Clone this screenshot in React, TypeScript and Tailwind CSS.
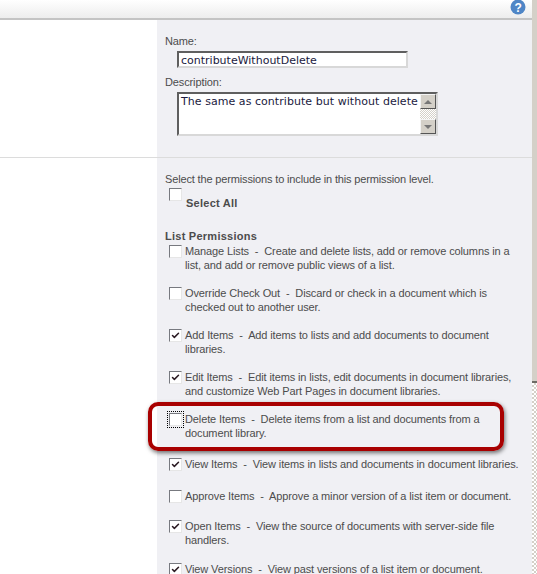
import { Check } from "lucide-react";

const font = "font-['Liberation_Sans',Arial,sans-serif]";

const permissions = [
  { title: "Manage Lists", text: "Create and delete lists, add or remove columns in a list, and add or remove public views of a list.", checked: false, mb: "mb-3.5" },
  { title: "Override Check Out", text: "Discard or check in a document which is checked out to another user.", checked: false, mb: "mb-3.5" },
  { title: "Add Items", text: "Add items to lists and add documents to document libraries.", checked: true, mb: "mb-3.5" },
  { title: "Edit Items", text: "Edit items in lists, edit documents in document libraries, and customize Web Part Pages in document libraries.", checked: true, mb: "mb-3.5" },
  { title: "Delete Items", text: "Delete items from a list and documents from a document library.", checked: false, mb: "mb-[17px]", focus: true },
  { title: "View Items", text: "View items in lists and documents in document libraries.", checked: true, mb: "mb-[18px]" },
  { title: "Approve Items", text: "Approve a minor version of a list item or document.", checked: false, mb: "mb-4" },
  { title: "Open Items", text: "View the source of documents with server-side file handlers.", checked: true, mb: "mb-[15px]" },
  { title: "View Versions", text: "View past versions of a list item or document.", checked: true, mb: "mb-0" },
];

function Box({ checked, focus }: { checked?: boolean; focus?: boolean }) {
  return (
    <span className={`flex h-[13px] w-[13px] shrink-0 items-center justify-center border border-[#77797f] border-r-[#e6e6e6] border-b-[#e6e6e6] bg-white ${focus ? "outline-1 outline-offset-1 outline-dotted outline-black" : ""}`}>
      {checked && <Check size={9} strokeWidth={4} className="text-[#2a1a22]" />}
    </span>
  );
}

function ScrollButton({ up }: { up?: boolean }) {
  return (
    <span className="flex h-[15px] w-4 items-center justify-center border border-[#f4f4f4] border-r-[#555] border-b-[#555] bg-[#d4d0c8]">
      <span className={`h-0 w-0 border-x-[4px] border-x-transparent ${up ? "border-b-[4px] border-b-[#777]" : "border-t-[4px] border-t-[#777]"}`} />
    </span>
  );
}

export default function App() {
  return (
    <div className={`relative flex h-[574px] w-[537px] overflow-hidden bg-white text-[11px] leading-[14px] tracking-[-0.12px] text-[#4c4c4c] ${font}`}>
      <div className="flex min-w-0 flex-1 flex-col">
        {/* Top bar */}
        <header className="flex h-[20px] shrink-0 justify-end border-b-2 border-[#c4c4c4] bg-gradient-to-b from-white to-[#ededed] pr-[6px]">
          <svg width="16" height="16" viewBox="0 0 16 16" className="-mt-[1px]">
            <circle cx="8" cy="8" r="7.5" fill="#4f86c6" />
            <text x="8" y="12.5" textAnchor="middle" fontSize="12" fontWeight="bold" fill="#fff" fontFamily="Liberation Sans">?</text>
          </svg>
        </header>

        <div className="flex min-h-0 flex-1">
          <div className="w-[157px] shrink-0 bg-white">
            <div className="h-[138px] border-b border-[#dcdcdc]" />
          </div>
          <main className="flex-1 bg-[#f0f0f4]">
            {/* Name and description */}
            <section className="h-[138px] border-b border-[#dcdcdc] pl-2 pt-[14px]">
              <div>Name:</div>
              <div className="ml-3 mt-[3px] flex h-[17px] w-[231px] items-center border-2 border-[#5f5f5f] border-r-[#d8d8d8] border-b-[#d8d8d8] bg-white pl-0.5 pt-0.5 font-['DejaVu_Sans',sans-serif] text-[11px] tracking-normal text-[#1a1a40]">
                contributeWithoutDelete
              </div>
              <div className="mt-[7px]">Description:</div>
              <div className="ml-3 mt-[3px] flex h-[44px] w-[261px] border-2 border-[#5f5f5f] border-r-[#d8d8d8] border-b-[#d8d8d8] bg-white">
                <div className="flex-1 overflow-hidden whitespace-nowrap pl-0.5 pt-[1px] font-['DejaVu_Sans',sans-serif] text-[11px] tracking-[0.05px] text-[#1a1a40]">
                  The same as contribute but without delete
                </div>
                <div className="flex w-4 shrink-0 flex-col justify-between bg-[repeating-conic-gradient(#d4d0c8_0_25%,#fff_0_50%)] bg-[length:2px_2px]">
                  <ScrollButton up />
                  <ScrollButton />
                </div>
              </div>
            </section>

            {/* Permissions */}
            <section className="pl-2 pt-[14px]">
              <div className="tracking-[-0.15px]">Select the permissions to include in this permission level.</div>
              <div className="ml-1 mt-[2px] flex h-[23px]">
                <Box />
                <span className="ml-[4px] mt-2 font-bold tracking-[0.25px]">Select All</span>
              </div>
              <div className="mt-[18px] font-bold tracking-[0.25px]">List Permissions</div>
              <div className="mt-[1px] w-[355px]">
                {permissions.map((p) => (
                  <div key={p.title} className={`flex ${p.mb}`}>
                    <div className="ml-1 w-[16px] shrink-0 pt-[1px]">
                      <Box checked={p.checked} focus={p.focus} />
                    </div>
                    <p>
                      {p.title}
                      <span className="whitespace-pre">{"  -  "}</span>
                      {p.text}
                    </p>
                  </div>
                ))}
              </div>
            </section>
          </main>
        </div>
      </div>

      {/* Page scrollbar edge */}
      <div className="flex w-[5px] shrink-0 flex-col">
        <div className="h-[383px] border-b-2 border-[#6e6c66] bg-[#d4d0c8]" />
        <div className="flex-1 bg-[repeating-conic-gradient(#d4d0c8_0_25%,#fff_0_50%)] bg-[length:4px_4px]" />
      </div>

      {/* Red callout */}
      <div className="pointer-events-none absolute left-[148px] top-[402px] h-[49px] w-[356px] rounded-[10px] border-[4px] border-[#a80000] shadow-[1px_2px_4px_rgba(0,0,0,0.55)]" />
    </div>
  );
}
